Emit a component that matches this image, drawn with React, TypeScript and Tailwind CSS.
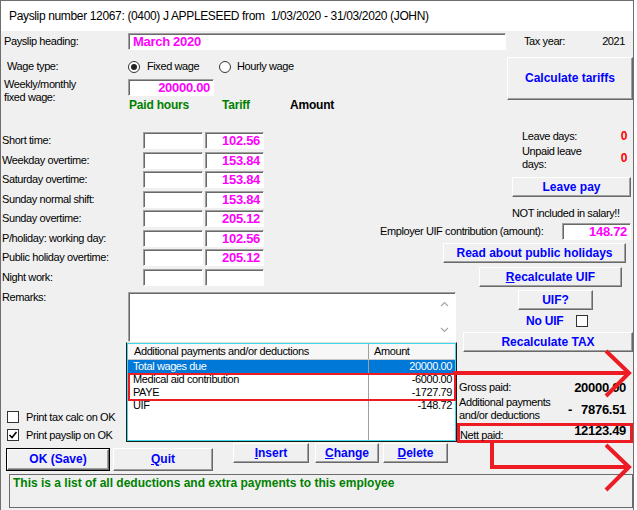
import React from "react";

// Classic sunken edit field
function Edit({ className = "", children }: { className?: string; children?: React.ReactNode }) {
  return (
    <div
      className={`bg-white border border-t-[#a0a0a0] border-l-[#a0a0a0] border-b-white border-r-white shadow-[inset_1px_1px_0_#696969] flex items-center ${className}`}
    >
      {children}
    </div>
  );
}

// Raised push button, optional default-button frame
function Btn({
  className = "",
  children,
  def,
}: {
  className?: string;
  children: React.ReactNode;
  def?: boolean;
}) {
  return (
    <div className={`${def ? "border border-black" : ""} ${className}`}>
      <div className="w-full h-full flex items-center justify-center bg-[#f0f0f0] border border-t-white border-l-white border-b-[#696969] border-r-[#696969] shadow-[inset_-1px_-1px_0_#a0a0a0] text-[12px] font-bold text-[#0000ff] tracking-normal">
        {children}
      </div>
    </div>
  );
}

function Val({ children, color = "text-black" }: { children: React.ReactNode; color?: string }) {
  return <span className={`text-[13px] font-bold tracking-[-0.3px] ${color}`}>{children}</span>;
}

function Radio({ checked }: { checked?: boolean }) {
  return (
    <span className="w-[12px] h-[12px] rounded-full border border-[#333] bg-white flex items-center justify-center shrink-0">
      {checked && <span className="w-[6px] h-[6px] rounded-full bg-[#222]" />}
    </span>
  );
}

function Check({ checked }: { checked?: boolean }) {
  return (
    <span className="w-[12px] h-[12px] border border-[#333] bg-white flex items-center justify-center shrink-0">
      {checked && (
        <svg width="10" height="10" viewBox="0 0 10 10">
          <path d="M1.5 5 L4 7.5 L8.5 2" stroke="#000" strokeWidth="1.6" fill="none" />
        </svg>
      )}
    </span>
  );
}

const rates: [string, string][] = [
  ["Short time:", "102.56"],
  ["Weekday overtime:", "153.84"],
  ["Saturday overtime:", "153.84"],
  ["Sunday normal shift:", "153.84"],
  ["Sunday overtime:", "205.12"],
  ["P/holiday: working day:", "102.56"],
  ["Public holiday overtime:", "205.12"],
  ["Night work:", ""],
];

const entries = [
  { name: "Total wages due", amount: "20000.00", selected: true },
  { name: "Medical aid contribution", amount: "-6000.00" },
  { name: "PAYE", amount: "-1727.79" },
  { name: "UIF", amount: "-148.72" },
];

function EntryList() {
  return (
    <div className="relative w-[331px] h-[100px] border border-[#1a1a1a] border-t-[#e3e3e3]">
      <div className="w-full h-full border border-[#3cd8e8] bg-white flex flex-col">
        <div className="h-[16px] flex border-b border-[#c8c8c8] bg-[#f7f7f7]">
          <div className="w-[241px] border-r border-[#a0a0a0] pl-[6px] flex items-center">
            Additional payments and/or deductions
          </div>
          <div className="flex-1 pl-[5px] flex items-center">Amount</div>
        </div>
        <div className="flex-1 flex">
          <div className="w-[241px] border-r border-[#a0a0a0] flex flex-col">
            {entries.map((e) => (
              <div
                key={e.name}
                className={`h-[13px] pl-[5px] flex items-center ${e.selected ? "bg-[#0078d7] text-white" : ""}`}
              >
                {e.name}
              </div>
            ))}
          </div>
          <div className="flex-1 flex flex-col">
            {entries.map((e) => (
              <div
                key={e.name}
                className={`h-[13px] pr-[3px] flex items-center justify-end ${e.selected ? "bg-[#0078d7] text-white" : ""}`}
              >
                {e.amount}
              </div>
            ))}
          </div>
        </div>
      </div>
      {/* highlight frame around the two deductions */}
      <div className="absolute left-[1px] top-[30px] w-[328px] h-[28px] border-2 border-[#ed1c24]" />
    </div>
  );
}

export default function App() {
  return (
    <div className="relative w-[637px] h-[510px] bg-white overflow-hidden font-['Liberation_Sans',Arial,sans-serif] text-[11px] leading-[13px] tracking-[-0.4px] text-black">
      <div className="w-[634px] h-[510px] border-x border-t border-[#6e6e6e] flex flex-col">
        {/* title bar */}
        <div className="h-[30px] bg-white flex items-center pl-[8px] text-[12px] tracking-[-0.35px]">
          Payslip number 12067: (0400) J APPLESEED from{"\u00a0"} 1/03/2020 - 31/03/2020 (JOHN)
        </div>

        <div className="flex-1 bg-[#f0f0f0] flex flex-col">
          {/* heading, wage type, fixed wage */}
          <div className="h-[98px] flex flex-col">
            <div className="mt-[2px] h-[17px] flex items-center">
              <div className="w-[127px] pl-[3px]">Payslip heading:</div>
              <Edit className="w-[378px] h-[17px] pl-[4px]">
                <Val color="text-[#ff00ff]">March 2020</Val>
              </Edit>
              <div className="ml-[18px]">Tax year:</div>
              <div className="flex-1 text-right pr-[8px]">2021</div>
            </div>

            <div className="mt-[7px] flex">
              <div className="flex-1 flex flex-col">
                <div className="h-[19px] flex items-center">
                  <div className="w-[127px] pl-[6px]">Wage type:</div>
                  <div className="w-[91px] flex items-center gap-[7px]">
                    <Radio checked />
                    Fixed wage
                  </div>
                  <div className="flex items-center gap-[6px]">
                    <Radio />
                    Hourly wage
                  </div>
                </div>
                <div className="mt-[3px] h-[17px] flex items-start">
                  <div className="w-[127px] pl-[3px] -mt-[1px]">
                    Weekly/monthly
                    <br />
                    fixed wage:
                  </div>
                  <Edit className="w-[86px] h-[17px] justify-end pr-[3px]">
                    <Val color="text-[#ff00ff]">20000.00</Val>
                  </Edit>
                </div>
                <div className="mt-[3px] h-[13px] flex items-center pl-[128px] text-[12px] font-bold tracking-[-0.2px]">
                  <div className="w-[93px] text-[#008000]">Paid hours</div>
                  <div className="w-[68px] text-[#008000]">Tariff</div>
                  <div>Amount</div>
                </div>
              </div>
              <Btn className="w-[126px] h-[43px]">Calculate tariffs</Btn>
            </div>
          </div>

          {/* overtime tariffs and leave */}
          <div className="h-[160px] flex">
            <div className="w-[270px] pt-[3px] flex flex-col">
              {rates.map(([label, tariff]) => (
                <div key={label} className="h-[19.5px] flex items-start">
                  <div className="w-[142px] pl-[1px] h-[17px] flex items-center">{label}</div>
                  <Edit className="w-[60px] h-[17px]" />
                  <Edit className="ml-[2px] w-[59px] h-[17px] justify-end pr-[3px]">
                    {tariff && <Val color="text-[#ff00ff]">{tariff}</Val>}
                  </Edit>
                </div>
              ))}
            </div>

            <div className="flex-1 flex flex-col">
              <div className="ml-[251px] w-[105px]">
                <div className="h-[14px] flex items-center justify-between">
                  <span>Leave days:</span>
                  <span className="text-[12px] font-bold text-[#ff0000]">0</span>
                </div>
                <div className="mt-[2px] flex items-center justify-between">
                  <span>
                    Unpaid leave
                    <br />
                    days:
                  </span>
                  <span className="text-[12px] font-bold text-[#ff0000]">0</span>
                </div>
              </div>
              <Btn className="ml-[241px] mt-[6px] w-[119px] h-[20px]">Leave pay</Btn>
              <div className="ml-[241px] mt-[10px] h-[13px] flex items-center">NOT included in salary!!</div>
              <div className="mt-[3px] h-[17px] flex items-center">
                <div className="ml-[109px] w-[182px]">Employer UIF contribution (amount):</div>
                <Edit className="w-[69px] h-[17px] justify-end pr-[3px]">
                  <Val color="text-[#ff00ff]">148.72</Val>
                </Edit>
              </div>
              <Btn className="ml-[172px] mt-[3px] w-[183px] h-[20px]">Read about public holidays</Btn>
              <Btn className="ml-[208px] mt-[4px] w-[143px] h-[20px]">
                <span>
                  <u>R</u>ecalculate UIF
                </span>
              </Btn>
            </div>
          </div>

          {/* remarks, entries and totals */}
          <div className="flex">
            <div className="w-[456px] flex flex-col">
              <div className="flex">
                <div className="w-[125px] flex flex-col">
                  <div className="pl-[1px] mt-[2px] h-[13px]">Remarks:</div>
                  <div className="mt-auto -mb-[2px] flex flex-col pl-[6px]">
                    <div className="h-[18px] flex items-center gap-[7px]">
                      <Check />
                      Print tax calc on OK
                    </div>
                    <div className="h-[18px] flex items-center gap-[7px]">
                      <Check checked />
                      Print payslip on OK
                    </div>
                  </div>
                </div>
                <div className="flex-1 flex flex-col">
                  <Edit className="ml-[2px] mt-[3px] w-[328px] h-[50px] justify-end items-stretch">
                    <div className="w-[17px] flex flex-col items-center justify-between pt-[8px] pb-[8px] pr-[4px]">
                      <svg width="9" height="6" viewBox="0 0 9 6">
                        <path d="M1 5 L4.5 1.5 L8 5" stroke="#a6a6a6" strokeWidth="1.2" fill="none" />
                      </svg>
                      <svg width="9" height="6" viewBox="0 0 9 6">
                        <path d="M1 1 L4.5 4.5 L8 1" stroke="#a6a6a6" strokeWidth="1.2" fill="none" />
                      </svg>
                    </div>
                  </Edit>
                  <EntryList />
                </div>
              </div>
              <div className="h-[30px] flex items-start pl-[5px]">
                <Btn def className="mt-[6px] w-[104px] h-[23px]">OK (Save)</Btn>
                <Btn className="mt-[6px] ml-[3px] w-[100px] h-[23px]">
                  <span>
                    <u>Q</u>uit
                  </span>
                </Btn>
                <Btn className="mt-[1px] ml-[20px] w-[76px] h-[20px]">
                  <span>
                    <u>I</u>nsert
                  </span>
                </Btn>
                <Btn className="mt-[1px] ml-[6px] w-[64px] h-[20px]">
                  <span>
                    <u>C</u>hange
                  </span>
                </Btn>
                <Btn className="mt-[1px] ml-[4px] w-[65px] h-[20px]">
                  <span>
                    <u>D</u>elete
                  </span>
                </Btn>
              </div>
            </div>

            <div className="flex-1 flex flex-col">
              <Btn className="ml-[61px] mt-[1px] w-[75px] h-[20px]">UIF?</Btn>
              <div className="ml-[69px] mt-[4px] h-[14px] flex items-center">
                <span className="w-[50px] text-[12px] font-bold text-[#0000ff] tracking-[-0.2px]">No UIF</span>
                <Check />
              </div>
              <Btn className="ml-[6px] mt-[4px] w-[170px] h-[20px]">Recalculate TAX</Btn>
              <div className="mt-[28px] h-[14px] flex items-center justify-between pl-[2px] pr-[7px]">
                <span>Gross paid:</span>
                <Val>20000.00</Val>
              </div>
              <div className="mt-[2px] flex items-center pl-[2px] pr-[7px]">
                <span className="flex-1">
                  Additional payments
                  <br />
                  and/or deductions
                </span>
                <div className="w-[58px] flex justify-between">
                  <Val>-</Val>
                  <Val>7876.51</Val>
                </div>
              </div>
              <div className="mt-[1px] h-[20px] border-[3px] border-[#ed1c24] flex items-start justify-between pr-[4px]">
                <span className="mt-[3px]">Nett paid:</span>
                <span className="-mt-[2px] leading-[14px]">
                  <Val>12123.49</Val>
                </span>
              </div>
            </div>
          </div>

          {/* status / hint box */}
          <div className="mt-[2px] ml-[8px] w-[624px] h-[34px] border border-[#6b6b6b] bg-[#f0f0f0] pl-[3px] pt-[1px] text-[12px] leading-[14px] font-bold text-[#008000] tracking-normal">
            This is a list of all deductions and extra payments to this employee
          </div>
        </div>
      </div>

      {/* red pointer arrows */}
      <svg
        className="absolute left-0 top-0 pointer-events-none"
        width="637"
        height="510"
        viewBox="0 0 637 510"
        fill="none"
        stroke="#ed1c24"
        strokeWidth="4"
      >
        <path d="M453 373 H628" />
        <path d="M606 351 L629 373 L606 396" />
        <path d="M492 442 V467 H628" />
        <path d="M606 445 L629 467 L606 490" />
      </svg>
    </div>
  );
}
